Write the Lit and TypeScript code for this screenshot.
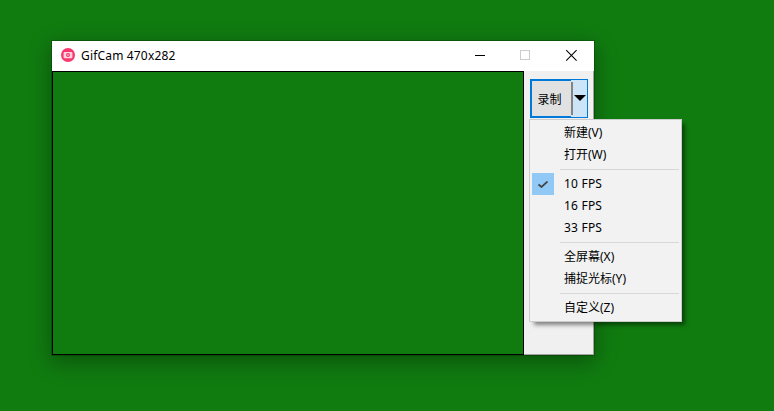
import { LitElement, html, css } from "lit";
import { customElement } from "lit/decorators.js";

type Entry = { label?: string; checked?: boolean; sep?: boolean; latin?: boolean };

const MENU: Entry[] = [
  { label: "新建(V)" },
  { label: "打开(W)" },
  { sep: true },
  { label: "10 FPS", checked: true, latin: true },
  { label: "16 FPS", latin: true },
  { label: "33 FPS", latin: true },
  { sep: true },
  { label: "全屏幕(X)" },
  { label: "捕捉光标(Y)" },
  { sep: true },
  { label: "自定义(Z)" },
];

@customElement("app-root")
export class AppRoot extends LitElement {
  static styles = css`
    :host {
      display: block;
      width: 774px;
      height: 411px;
      position: relative;
      overflow: hidden;
      background: #107c10;
      font-family: "Noto Sans", "Noto Sans CJK SC", sans-serif;
      font-size: 12px;
      color: #000;
    }
    .window {
      position: absolute;
      left: 52px;
      top: 41px;
      width: 542px;
      height: 314px;
      display: flex;
      flex-direction: column;
      background: #f0f0f0;
      box-shadow: 0 0 0 1px rgba(0, 0, 0, 0.2), 0 6px 20px 2px rgba(0, 0, 0, 0.3);
    }
    .titlebar {
      height: 30px;
      flex: none;
      box-sizing: border-box;
      background: #fff;
      display: flex;
      align-items: center;
      padding-left: 9px;
    }
    .app-icon {
      width: 14px;
      height: 14px;
      flex: none;
      margin-bottom: 2px;
    }
    .title {
      margin-left: 6px;
      font-size: 12px;
      letter-spacing: 0.17px;
      flex: 1;
      line-height: 16px;
    }
    .caps {
      display: flex;
      height: 30px;
    }
    .cap {
      width: 46px;
      height: 30px;
      box-sizing: border-box;
      padding-bottom: 2px;
      display: flex;
      align-items: center;
      justify-content: center;
    }
    .cap svg {
      width: 10px;
      height: 10px;
      overflow: visible;
      fill: none;
    }
    .min {
      padding-left: 2px;
      stroke: #000;
    }
    .max {
      stroke: #cccccc;
    }
    .close {
      stroke: #000;
      stroke-width: 1.05;
    }
    .crisp {
      shape-rendering: crispEdges;
    }
    .body {
      flex: 1;
      display: flex;
      min-height: 0;
    }
    .capture {
      width: 472px;
      box-sizing: border-box;
      border: 1px solid #000;
      background: #107c10;
      flex: none;
    }
    .side {
      flex: 1;
      box-sizing: border-box;
      padding: 8px 0 0 6px;
      border-right: 1px solid #a3a3a3;
      border-bottom: 1px solid #a3a3a3;
    }
    .split {
      display: flex;
      width: 58px;
      height: 39px;
    }
    .rec {
      width: 41px;
      box-sizing: border-box;
      border: 2px solid #0078d7;
      border-right: 0;
      background: #e1e1e1;
      display: flex;
      align-items: center;
      justify-content: center;
      font-size: 12px;
      padding: 1px 4px 0 0;
    }
    .drop {
      width: 17px;
      box-sizing: border-box;
      border: 1px solid #0078d7;
      border-left: 0;
      background: #cce4f7;
      display: flex;
      align-items: center;
    }
    .divider {
      width: 2px;
      height: 33px;
      background: #838383;
      flex: none;
    }
    .arrow-cell {
      flex: 1;
      display: flex;
      align-items: center;
      justify-content: center;
    }
    .arrow {
      width: 0;
      height: 0;
      border-left: 6px solid transparent;
      border-right: 6px solid transparent;
      border-top: 6px solid #000;
      margin-bottom: 1px;
    }
    .menu {
      position: absolute;
      left: 529px;
      top: 119px;
      width: 153px;
      height: 203px;
      box-sizing: border-box;
      border: 1px solid #ccc;
      background: #f2f2f2;
      padding: 2px;
      box-shadow: 4px 4px 4px -1px rgba(0, 0, 0, 0.45);
    }
    .item {
      height: 22px;
      display: flex;
      align-items: center;
      padding-left: 32px;
      line-height: 22px;
      position: relative;
      white-space: nowrap;
    }
    .latin {
      letter-spacing: 0.2px;
    }
    .check {
      position: absolute;
      left: 0;
      top: 0;
      width: 22px;
      height: 22px;
      background: #90c8f6;
      display: flex;
      align-items: center;
      justify-content: center;
    }
    .sep {
      height: 1px;
      background: #d7d7d7;
      margin: 3px 0 3px 28px;
    }
  `;

  render() {
    return html`
      <div class="window">
        <div class="titlebar">
          <svg class="app-icon" viewBox="0 0 14 14">
            <circle cx="7" cy="7" r="7" fill="#f9386d"></circle>
            <rect x="2.6" y="4" width="8.8" height="6.2" rx="1.2" fill="#fdd5e0"></rect>
            <circle cx="7" cy="7.1" r="2" fill="#f9386d"></circle>
            <circle cx="7" cy="7.1" r="0.8" fill="#fdd5e0"></circle>
          </svg>
          <span class="title">GifCam 470x282</span>
          <div class="caps">
            <div class="cap min">
              <svg class="crisp" viewBox="0 0 10 10"><path d="M0 5.5H10"></path></svg>
            </div>
            <div class="cap max">
              <svg class="crisp" viewBox="0 0 10 10"><rect x="0.5" y="0.5" width="9" height="9"></rect></svg>
            </div>
            <div class="cap close">
              <svg viewBox="0 0 10 10"><path d="M0.2 0.2L10.6 10.6M10.6 0.2L0.2 10.6"></path></svg>
            </div>
          </div>
        </div>
        <div class="body">
          <div class="capture"></div>
          <div class="side">
            <div class="split">
              <div class="rec">录制</div>
              <div class="drop">
                <span class="divider"></span>
                <span class="arrow-cell"><span class="arrow"></span></span>
              </div>
            </div>
          </div>
        </div>
      </div>
      <div class="menu">
        ${MENU.map((m) =>
          m.sep
            ? html`<div class="sep"></div>`
            : html`<div class="item">
                ${m.checked
                  ? html`<span class="check">
                      <svg width="10" height="7" viewBox="0 0 10 7" fill="none" stroke="#444" stroke-width="1.7">
                        <path d="M0.5 3.5L3.5 6L9.5 0.5"></path>
                      </svg>
                    </span>`
                  : ""}
                <span class=${m.latin ? "latin" : ""}>${m.label}</span>
              </div>`
        )}
      </div>
    `;
  }
}
